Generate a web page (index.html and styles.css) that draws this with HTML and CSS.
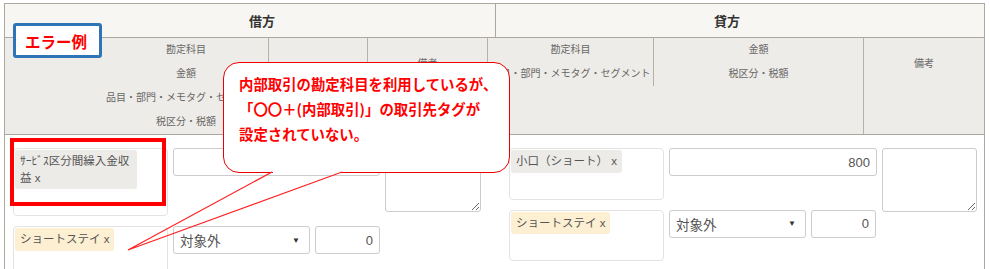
FILE: index.html
```html
<!DOCTYPE html>
<html lang="ja">
<head>
    <meta charset="UTF-8">
    <title>仕訳 エラー例</title>
    <link rel="stylesheet" href="styles.css">
</head>
<body>
<div class="page">
    <div class="sheet">
        <div class="head-top">
            <div class="ht ht-debit">借方</div>
            <div class="ht ht-credit">貸方</div>
        </div>

        <div class="head-sub">
            <div class="hs hs-a">
                <div class="hs-wide">勘定科目<br>金額<br>品目・部門・メモタグ・セグメント<br>税区分・税額</div>
            </div>
            <div class="hs hs-b"></div>
            <div class="hs hs-c hs-note">備考</div>
            <div class="hs hs-d hs-short">勘定科目<br>品目・部門・メモタグ・セグメント</div>
            <div class="hs hs-e hs-short">金額<br>税区分・税額</div>
            <div class="hs hs-f hs-note">備考</div>
        </div>

        <div class="rows">
            <div class="side side-debit">
                <div class="tag-box"><span class="tag">ｻｰﾋﾞｽ区分間繰入金収益 x</span></div>
                <div class="amount"><input type="text" class="num" value=""></div>
                <textarea class="memo"></textarea>
                <div class="tag-box"><span class="tag tag-partner">ショートステイ x</span></div>
                <div class="amount tax-line">
                    <div class="select"><span>対象外</span><span class="arrow">▼</span></div>
                    <input type="text" class="num tax" value="0">
                </div>
            </div>

            <div class="side side-credit">
                <div class="tag-box"><span class="tag">小口（ショート） x</span></div>
                <div class="amount"><input type="text" class="num" value="800"></div>
                <textarea class="memo"></textarea>
                <div class="tag-box"><span class="tag tag-partner">ショートステイ x</span></div>
                <div class="amount tax-line">
                    <div class="select"><span>対象外</span><span class="arrow">▼</span></div>
                    <input type="text" class="num tax" value="0">
                </div>
            </div>
        </div>
    </div>

    <!-- annotations drawn over the screen -->
    <div class="label-box">エラー例</div>
    <div class="mark"></div>
    <div class="bubble">内部取引の勘定科目を利用しているが、<br>「〇〇＋(内部取引)」の取引先タグが<br>設定されていない。</div>
    <svg class="tail" width="990" height="269" viewBox="0 0 990 269">
        <rect x="273" y="171" width="68" height="2.5" fill="#ffffff"/>
        <polyline points="272,172 128,250 342,172" fill="none" stroke="#ff2020" stroke-width="1.2"/>
    </svg>
</div>
</body>
</html>
```

FILE: styles.css
```css
body {
    margin: 0;
    background-color: #ffffff;
    font-family: "Liberation Sans", "Noto Sans CJK JP", sans-serif;
    color: #555555;
}
.page {
    position: relative;
    width: 990px;
    height: 269px;
    overflow: hidden;
}
.sheet {
    margin: 3px 0 0 4px;
    width: 981px;
    box-sizing: border-box;
    border: 1px solid #aca79f;
    border-bottom: none;
    height: 270px;
}
.head-top {
    display: flex;
    height: 33px;
    background-color: #f7f6f2;
    border-bottom: 1px solid #aca79f;
}
.ht {
    display: flex;
    align-items: center;
    justify-content: center;
    font-size: 13px;
    font-weight: bold;
    color: #333333;
}
.ht-debit {
    width: 490px;
    padding-left: 24px;
    box-sizing: border-box;
}
.ht-credit {
    flex: 1;
    padding-right: 26px;
    border-left: 1px solid #aca79f;
}
.head-sub {
    display: flex;
    align-items: stretch;
    height: 97px;
    box-sizing: border-box;
    background-color: #eeece8;
    border-bottom: 1px solid #aca79f;
    font-size: 10px;
    line-height: 24px;
    color: #666666;
    text-align: center;
}
.hs {
    box-sizing: border-box;
}
.hs-a { width: 263px; }
.hs-wide {
    width: 362px;
    white-space: nowrap;
}
.hs-b { width: 99px; border-left: 1px solid #b5b0a8; }
.hs-c { width: 120px; border-left: 1px solid #b5b0a8; }
.hs-d { width: 166px; border-left: 1px solid #b5b0a8; white-space: nowrap; }
.hs-e { width: 210px; border-left: 1px solid #b5b0a8; }
.hs-f { width: 121px; border-left: 1px solid #b5b0a8; }
.hs-short {
    align-self: flex-start;
    height: 48px;
}
.hs-note {
    padding-top: 14px;
}
.rows {
    display: flex;
    align-items: flex-start;
    padding: 13px 0 0 8px;
}
.side {
    display: grid;
    grid-template-columns: 155px 207px 96px;
    grid-template-rows: auto auto;
    align-content: start;
    column-gap: 5px;
    row-gap: 10px;
    align-items: start;
}
.side-credit {
    margin-left: 28px;
    grid-template-columns: 155px 208px 95px;
}
.tag-box {
    border: 1px solid #e3e3e3;
    border-radius: 4px;
    padding: 1px 1px 26px;
}
.tag {
    display: inline-block;
    max-width: 122px;
    box-sizing: border-box;
    padding: 3px 5px;
    border-radius: 3px;
    background-color: #ecebe7;
    font-size: 11.5px;
    line-height: 16.5px;
    color: #555555;
}
.tag-partner {
    background-color: #fcefd2;
}
.amount {
    display: flex;
}
.tax-line {
    gap: 5px;
}
.num {
    width: 100%;
    height: 28px;
    box-sizing: border-box;
    border: 1px solid #cccccc;
    border-radius: 3px;
    padding: 0 6px;
    font-family: "Liberation Sans", sans-serif;
    font-size: 13px;
    color: #555555;
    text-align: right;
    outline: none;
}
.tax {
    width: 65px;
    flex: none;
}
.select {
    display: flex;
    align-items: center;
    justify-content: space-between;
    width: 137px;
    height: 28px;
    box-sizing: border-box;
    border: 1px solid #cccccc;
    border-radius: 3px;
    padding: 0 9px 0 6px;
    font-size: 13.5px;
    color: #555555;
}
.arrow {
    font-size: 8px;
    color: #333333;
}
.memo {
    grid-column: 3;
    grid-row: 1 / 3;
    height: 64px;
    box-sizing: border-box;
    border: 1px solid #cccccc;
    border-radius: 3px;
    margin: 0;
    resize: both;
}
.label-box {
    position: absolute;
    left: 13px;
    top: 23px;
    width: 89px;
    height: 35px;
    box-sizing: border-box;
    border: 3px solid #2e75b6;
    border-radius: 3px;
    background-color: #ffffff;
    display: flex;
    align-items: center;
    padding-left: 9px;
    font-family: "Noto Sans CJK JP", sans-serif;
    font-size: 15.5px;
    font-weight: bold;
    color: #ff0000;
}
.mark {
    position: absolute;
    left: 10px;
    top: 138px;
    width: 156px;
    height: 68px;
    box-sizing: border-box;
    border: 4px solid #ff0000;
}
.bubble {
    position: absolute;
    left: 223px;
    top: 62px;
    width: 287px;
    height: 111px;
    box-sizing: border-box;
    border: 1px solid #ee0000;
    border-radius: 16px;
    background-color: #ffffff;
    padding: 8px 0 0 15px;
    font-family: "Noto Sans CJK JP", sans-serif;
    font-size: 14.4px;
    font-weight: bold;
    line-height: 25px;
    color: #ff0000;
    white-space: nowrap;
}
.tail {
    position: absolute;
    left: 0;
    top: 0;
    pointer-events: none;
}
```
